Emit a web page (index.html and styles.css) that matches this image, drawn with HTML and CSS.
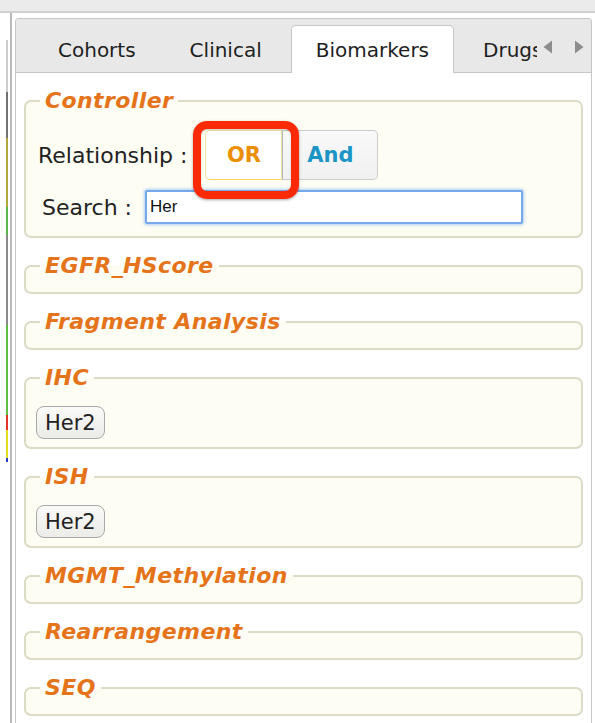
FILE: index.html
```html
<!DOCTYPE html>
<html lang="en">
<head>
<meta charset="utf-8">
<title>Biomarkers</title>
<link rel="stylesheet" href="styles.css">
</head>
<body>
<div class="topbar"></div>
<div class="layout">
  <div class="gutter">
    <div class="status-strip">
      <span class="seg seg-idle"></span>
      <span class="seg seg-dark"></span>
      <span class="seg seg-olive"></span>
      <span class="seg seg-green-a"></span>
      <span class="seg seg-grey"></span>
      <span class="seg seg-green-b"></span>
      <span class="seg seg-red"></span>
      <span class="seg seg-yellow"></span>
      <span class="seg seg-blue"></span>
    </div>
  </div>
  <div class="splitter"></div>

  <section class="panel">
    <div class="tabs-bar">
      <ul class="tab-list">
        <li class="tab">Cohorts</li>
        <li class="tab">Clinical</li>
        <li class="tab active">Biomarkers</li>
        <li class="tab">Drugs</li>
      </ul>
      <div class="tab-scroll">
        <svg class="scroll-arrow" width="10" height="14" viewBox="0 0 10 14"><polygon points="9,0.5 9,13.5 0.5,7" /></svg>
        <svg class="scroll-arrow" width="10" height="14" viewBox="0 0 10 14"><polygon points="1,0.5 1,13.5 9.5,7" /></svg>
      </div>
    </div>

    <div class="tab-panel">
      <fieldset class="group controller">
        <legend>Controller</legend>
        <div class="ctrl-row relation-row">
          <span class="ctrl-label">Relationship :</span>
          <div class="buttonset">
            <button class="seg-btn seg-or is-active" type="button">OR</button><button class="seg-btn seg-and" type="button">And</button>
            <span class="callout"></span>
          </div>
        </div>
        <div class="ctrl-row search-row">
          <label class="ctrl-label search-label" for="marker-search">Search :</label>
          <input id="marker-search" class="search-input" type="text" value="Her">
        </div>
      </fieldset>

      <fieldset class="group"><legend>EGFR_HScore</legend></fieldset>
      <fieldset class="group"><legend>Fragment Analysis</legend></fieldset>
      <fieldset class="group">
        <legend>IHC</legend>
        <div class="chips"><button class="chip" type="button">Her2</button></div>
      </fieldset>
      <fieldset class="group">
        <legend>ISH</legend>
        <div class="chips"><button class="chip" type="button">Her2</button></div>
      </fieldset>
      <fieldset class="group"><legend>MGMT_Methylation</legend></fieldset>
      <fieldset class="group"><legend>Rearrangement</legend></fieldset>
      <fieldset class="group"><legend>SEQ</legend></fieldset>
    </div>
  </section>
</div>
</body>
</html>
```

FILE: styles.css
```css
html, body {
  margin: 0;
  padding: 0;
  overflow: hidden;
  background: #ffffff;
}

body {
  font-family: "DejaVu Sans", Verdana, sans-serif;
  color: #222;
}

/* window chrome strip along the top */
.topbar {
  height: 11px;
  background: #ebebeb;
  border-bottom: 2px solid #d0d0d0;
}

.layout {
  display: flex;
  height: 710px;
}

/* narrow status column on the far left */
.gutter {
  width: 10px;
  flex: none;
  padding-top: 27px;
  box-sizing: border-box;
}

.status-strip {
  margin-left: 6px;
  width: 2px;
  display: flex;
  flex-direction: column;
}

.seg { display: block; }
.seg-idle    { height: 52px; background: #cdcdcd; }
.seg-dark    { height: 46px; background: #727272; }
.seg-olive   { height: 69px; background: #b3a63c; }
.seg-green-a { height: 28px; background: #5ab84a; }
.seg-grey    { height: 90px; background: #8a8a8a; }
.seg-green-b { height: 90px; background: #5cbe45; }
.seg-red     { height: 15px; background: #e6322a; }
.seg-yellow  { height: 28px; background: #e4df1e; }
.seg-blue    { height: 4px;  background: #2b3fc8; }

.splitter {
  width: 2px;
  flex: none;
  background: #b9b9b9;
}

/* tabbed panel */
.panel {
  flex: none;
  width: 577px;
  margin: 5px 0 0 3px;
  box-sizing: border-box;
  border: 1px solid #c6c6c6;
  border-bottom: 0;
  border-radius: 4px 4px 0 0;
  background: #fff;
  overflow: hidden;
}

.tabs-bar {
  position: relative;
  height: 54px;
  background: #e8e8e8;
  box-shadow: inset 0 -1px 0 #c6c6c6;
  overflow: hidden;
}

.tab-list {
  list-style: none;
  margin: 0;
  padding: 6px 0 0 17px;
  display: flex;
  flex-wrap: nowrap;
}

.tab {
  flex: none;
  height: 48px;
  box-sizing: border-box;
  padding: 12px 24px 0;
  margin-right: 4px;
  font-size: 20px;
  line-height: 24px;
  white-space: nowrap;
  color: #1e1e1e;
  border: 1px solid transparent;
  border-bottom: 0;
  border-radius: 5px 5px 0 0;
}

.tab.active {
  background: #fff;
  border-color: #c6c6c6;
}

/* scroll buttons overlaying the end of the tab strip */
.tab-scroll {
  position: absolute;
  top: 0;
  right: 0;
  bottom: 1px;
  width: 54px;
  padding: 2px 0 0 6px;
  box-sizing: border-box;
  background: #e8e8e8;
  display: flex;
  align-items: center;
  gap: 21px;
}

.scroll-arrow polygon { fill: #8c8c8c; }

.tab-panel {
  padding: 15px 8px;
}

/* filter groups */
.group {
  margin: 0 0 15px;
  padding: 5px 10px 8px;
  min-width: 0;
  border: 2px solid #dcdbc6;
  border-radius: 7px;
  background: #fdfdf4;
}

.group legend {
  margin-left: 4px;
  padding: 0 5px;
  font-size: 22px;
  line-height: 26px;
  font-weight: bold;
  font-style: italic;
  letter-spacing: 0.4px;
  color: #e5731a;
}

.controller {
  padding-bottom: 12px;
}

.ctrl-row {
  display: flex;
  align-items: center;
}

.ctrl-label {
  font-size: 22px;
  color: #222;
}

.relation-row {
  margin-top: 11px;
  padding-left: 2px;
  gap: 18px;
}

.buttonset {
  position: relative;
  display: flex;
}

.seg-btn {
  height: 50px;
  margin: 0;
  box-sizing: border-box;
  font-family: inherit;
  font-size: 21px;
  font-weight: bold;
  border: 1px solid #cccccc;
  background: linear-gradient(#f9f9f9, #f1f1f1);
  color: #1c94c4;
  padding: 0;
}

.seg-or {
  width: 77px;
  border-radius: 5px 0 0 5px;
}

.seg-and {
  width: 96px;
  border-left-color: #b5b5b5;
  border-radius: 0 5px 5px 0;
}

.seg-btn.is-active {
  background: #ffffff;
  border-color: #f3e3a0;
  border-bottom-color: #fbd850;
  color: #eb8f00;
}

/* red outline drawn around the selected option */
.callout {
  position: absolute;
  left: -12px;
  top: -9px;
  width: 106px;
  height: 78px;
  box-sizing: border-box;
  border: 8px solid #fb2a06;
  border-radius: 14px;
  box-shadow: 0 1px 3px rgba(0, 0, 0, 0.35), inset 0 1px 2px rgba(0, 0, 0, 0.2);
  pointer-events: none;
}

.search-row {
  margin-top: 10px;
}

.search-label {
  width: 109px;
  padding-left: 6px;
  box-sizing: border-box;
}

.search-input {
  width: 378px;
  height: 34px;
  box-sizing: border-box;
  margin: 0;
  padding: 0 3px;
  border: 2px solid #75a9ea;
  border-radius: 2px;
  box-shadow: 0 0 3px 1px rgba(110, 165, 240, 0.55);
  font-family: "Liberation Sans", Arial, sans-serif;
  font-size: 17px;
  color: #111;
  background: #fff;
  outline: none;
}

.chips {
  margin-top: 10px;
  display: flex;
}

.chip {
  height: 33px;
  margin: 0;
  padding: 0 8px;
  box-sizing: border-box;
  font-family: inherit;
  font-size: 21px;
  color: #222;
  border: 1px solid #a9a9a9;
  border-radius: 8px;
  background: linear-gradient(#fafaf8, #ebebe8);
}
```
